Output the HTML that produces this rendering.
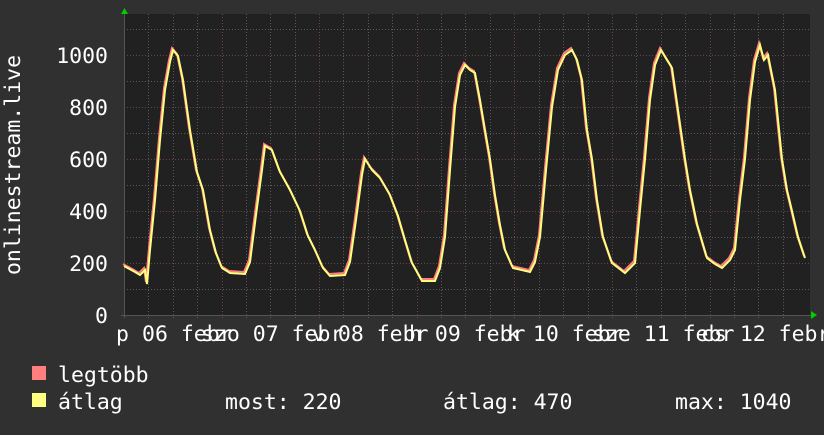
<!DOCTYPE html>
<html><head><meta charset="utf-8"><style>
body{margin:0;background:#303030;width:824px;height:430px;overflow:hidden}
svg text{font-family:"DejaVu Sans Mono","Liberation Mono",monospace;font-size:21.5px;fill:#fff}
</style></head><body>
<svg width="824" height="430" xmlns="http://www.w3.org/2000/svg">
<rect width="824" height="430" fill="#303030"/>
<rect x="124" y="14" width="686" height="301" fill="#212121"/>
<g stroke="#5a5a5a" stroke-width="1" stroke-dasharray="1,2">
<line x1="124" x2="810" y1="29.5" y2="29.5"/><line x1="124" x2="810" y1="81.5" y2="81.5"/><line x1="124" x2="810" y1="133.5" y2="133.5"/><line x1="124" x2="810" y1="185.5" y2="185.5"/><line x1="124" x2="810" y1="237.5" y2="237.5"/><line x1="124" x2="810" y1="289.5" y2="289.5"/>
</g>
<g stroke="#6a4444" stroke-width="1" stroke-dasharray="1,2">
<line x1="124" x2="810" y1="55.5" y2="55.5"/><line x1="124" x2="810" y1="107.5" y2="107.5"/><line x1="124" x2="810" y1="159.5" y2="159.5"/><line x1="124" x2="810" y1="211.5" y2="211.5"/><line x1="124" x2="810" y1="263.5" y2="263.5"/>
</g>
<g stroke="#5a5a5a" stroke-dasharray="1,2">
<line x1="148.5" x2="148.5" y1="14" y2="318"/><line x1="173.5" x2="173.5" y1="14" y2="318"/><line x1="197.5" x2="197.5" y1="14" y2="318"/>
<line x1="246.5" x2="246.5" y1="14" y2="318"/><line x1="270.5" x2="270.5" y1="14" y2="318"/><line x1="295.5" x2="295.5" y1="14" y2="318"/>
<line x1="343.5" x2="343.5" y1="14" y2="318"/><line x1="368.5" x2="368.5" y1="14" y2="318"/><line x1="392.5" x2="392.5" y1="14" y2="318"/>
<line x1="441.5" x2="441.5" y1="14" y2="318"/><line x1="465.5" x2="465.5" y1="14" y2="318"/><line x1="490.5" x2="490.5" y1="14" y2="318"/>
<line x1="539.5" x2="539.5" y1="14" y2="318"/><line x1="563.5" x2="563.5" y1="14" y2="318"/><line x1="588.5" x2="588.5" y1="14" y2="318"/>
<line x1="636.5" x2="636.5" y1="14" y2="318"/><line x1="661.5" x2="661.5" y1="14" y2="318"/><line x1="685.5" x2="685.5" y1="14" y2="318"/>
<line x1="734.5" x2="734.5" y1="14" y2="318"/><line x1="758.5" x2="758.5" y1="14" y2="318"/><line x1="783.5" x2="783.5" y1="14" y2="318"/>
</g>
<g stroke="#6a4444" stroke-dasharray="1,2">
<line x1="222.5" x2="222.5" y1="14" y2="318"/><line x1="319.5" x2="319.5" y1="14" y2="318"/><line x1="417.5" x2="417.5" y1="14" y2="318"/><line x1="514.5" x2="514.5" y1="14" y2="318"/><line x1="612.5" x2="612.5" y1="14" y2="318"/><line x1="710.5" x2="710.5" y1="14" y2="318"/>
</g>
<line x1="121" x2="812" y1="315.5" y2="315.5" stroke="#555"/>
<line x1="124.5" x2="124.5" y1="12" y2="318" stroke="#555"/>
<polygon points="121,14 128,14 124.5,8" fill="#00cc00"/>
<polygon points="811,311 811,319 817,315" fill="#00cc00"/>
<polyline fill="none" stroke="#ff7f7f" stroke-width="2" transform="translate(-1,-2)" points="124,266 135,272 140,275 145,270 147,284 150,250 155,200 160,140 165,90 170,62 173,50 178,56 183,80 190,130 197,172 203,190 210,230 216,253 222,268 230,273 245,274 250,262 256,215 262,170 265,146 272,150 280,172 290,190 300,211 308,236 315,250 323,268 330,276 345,275 350,262 356,220 362,175 365,159 372,170 380,178 390,195 398,216 405,240 412,263 422,281 435,281 440,268 445,237 450,170 455,107 460,75 465,65 470,70 475,73 480,100 485,130 490,159 495,195 500,225 505,250 513,268 530,272 535,262 540,237 546,170 552,107 558,70 565,55 572,50 577,60 582,80 587,130 592,159 597,200 603,237 612,263 625,273 630,268 635,263 640,210 645,159 650,100 655,65 661,50 667,60 672,68 678,110 685,159 690,190 697,224 707,258 715,264 722,268 730,260 735,250 740,200 745,159 750,100 755,62 760,45 764,60 768,55 775,90 782,159 787,190 792,211 798,237 805,258"/>
<polyline fill="none" stroke="#ffff7f" stroke-width="2" points="124,266 135,272 140,275 145,270 147,284 150,250 155,200 160,140 165,90 170,62 173,50 178,56 183,80 190,130 197,172 203,190 210,230 216,253 222,268 230,273 245,274 250,262 256,215 262,170 265,146 272,150 280,172 290,190 300,211 308,236 315,250 323,268 330,276 345,275 350,262 356,220 362,175 365,159 372,170 380,178 390,195 398,216 405,240 412,263 422,281 435,281 440,268 445,237 450,170 455,107 460,75 465,65 470,70 475,73 480,100 485,130 490,159 495,195 500,225 505,250 513,268 530,272 535,262 540,237 546,170 552,107 558,70 565,55 572,50 577,60 582,80 587,130 592,159 597,200 603,237 612,263 625,273 630,268 635,263 640,210 645,159 650,100 655,65 661,50 667,60 672,68 678,110 685,159 690,190 697,224 707,258 715,264 722,268 730,260 735,250 740,200 745,159 750,100 755,62 760,45 764,60 768,55 775,90 782,159 787,190 792,211 798,237 805,258"/>
<g text-anchor="end">
<text x="108" y="63">1000</text><text x="108" y="115">800</text><text x="108" y="167">600</text><text x="108" y="219">400</text><text x="108" y="271">200</text><text x="108" y="323">0</text>
</g>
<text transform="translate(20,165) rotate(-90)" text-anchor="middle">onlinestream.live</text>
<text x="116" y="341">p</text><text x="142" y="341">06 febr</text>
<text x="201" y="341">szo 07 febr</text>
<text x="312" y="341">v 08 febr</text>
<text x="409" y="341">h 09 febr</text>
<text x="507" y="341">k 10 febr</text>
<text x="592" y="341">sze 11 febr</text>
<text x="701" y="341">cs 12 febr</text>
<rect x="32" y="366" width="14" height="14" fill="#ff7f7f"/>
<rect x="32" y="393" width="14" height="14" fill="#ffff7f"/>
<text x="58" y="382">legtöbb</text>
<text x="58" y="409">átlag</text>
<text x="225" y="409">most: 220</text>
<text x="443" y="409">átlag: 470</text>
<text x="675" y="409">max: 1040</text>
</svg>
</body></html>
